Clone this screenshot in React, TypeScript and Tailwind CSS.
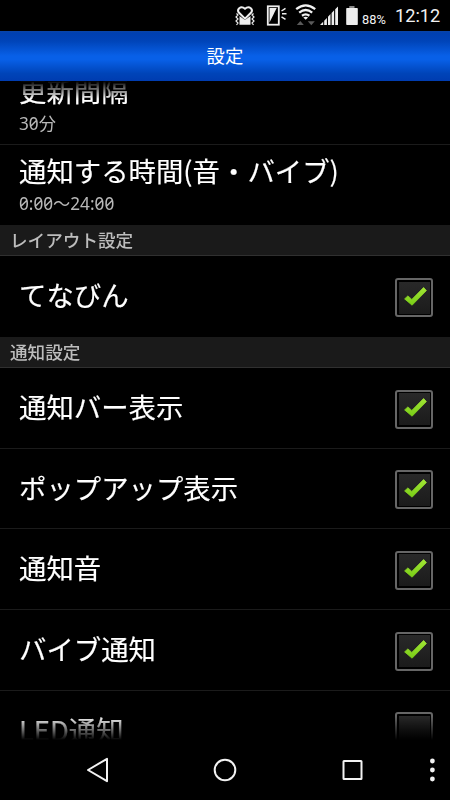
import React from 'react';

function CheckBox({ checked }: { checked: boolean }) {
  return (
    <span className="flex h-[39px] w-[38px] shrink-0 items-center justify-center rounded-[3px] border-2 border-[#666666] bg-black">
      <span className="flex h-[32px] w-[31px] items-center justify-center bg-gradient-to-b from-[#292929] to-[#1b1b1b]">
        {checked && (
          <svg width="31" height="32" viewBox="0 0 31 32" fill="none">
            <defs>
              <linearGradient id="tick" x1="0" y1="0" x2="0" y2="1">
                <stop offset="0" stopColor="#a2e635" />
                <stop offset="1" stopColor="#78cc16" />
              </linearGradient>
            </defs>
            <path d="M5.6 16.9 8.9 13.9 12.8 17.4 24.6 5.5 27.4 8.6 13.1 23.2Z" fill="url(#tick)" stroke="url(#tick)" strokeWidth="0.8" strokeLinejoin="round" />
          </svg>
        )}
      </span>
    </span>
  );
}

function TextRow({ title, summary, last }: { title: string; summary: string; last?: boolean }) {
  return (
    <div className={last ? 'h-[80px] shrink-0 px-[19px] pt-[8px]' : 'h-[81px] shrink-0 border-b border-[#1b1b1b] px-[19px] pt-[9px]'}>
      <div className="h-[34px] text-[27.4px] leading-[34px] text-white [-webkit-text-stroke:0.15px_white]">{title}</div>
      <div className="mt-[6px] h-[22px] font-['Noto_Sans','Noto_Sans_CJK_JP',sans-serif] text-[17.2px] leading-[22px] text-[#b8b8b8] slashed-zero">{summary}</div>
    </div>
  );
}

function CheckRow({ title, checked = true, last }: { title: string; checked?: boolean; last?: boolean }) {
  return (
    <div className={last ? 'flex h-[81px] shrink-0 items-center justify-between pr-[17px] pl-[19px]' : 'flex h-[80.7px] shrink-0 items-center justify-between border-b border-[#1b1b1b] pr-[17px] pl-[19px]'}>
      <span className={last ? 'pb-[6px] text-[27.4px] leading-[36px] text-white [-webkit-text-stroke:0.15px_white]' : 'pb-[4px] text-[27.4px] leading-[36px] text-white [-webkit-text-stroke:0.15px_white]'}>{title}</span>
      <span className="pt-[2.5px]"><CheckBox checked={checked} /></span>
    </div>
  );
}

function Section({ title }: { title: string }) {
  return (
    <div className="h-[31px] shrink-0 border-b border-[#303030] bg-[#1a1a1a] pl-[10px] text-[17.6px] leading-[29px] font-medium text-[#bdbdbd]">{title}</div>
  );
}

function StatusBar() {
  return (
    <div className="flex h-[31px] shrink-0 justify-end bg-black pr-[10px] text-[#f2f2f2]">
      <svg width="132" height="31" viewBox="234 0 132 31" fill="none">
        <path d="M239.5 16V24.8H250.5V16L245 20Z" fill="#eeeeee" />
        <path d="M245 18.6 238.6 12.3Q237.2 10 239.2 8.2Q242 6.2 245 8.8Q248 6.2 250.8 8.2Q252.8 10 251.4 12.3Z" fill="black" stroke="#eeeeee" strokeWidth="2" />
        <path d="M236.5 13.5 238 15 236 17 238 19 236 21 238 23 236.5 25M253.5 13.5 252 15 254 17 252 19 254 21 252 23 253.5 25" stroke="#eeeeee" strokeWidth="1.2" />
        <rect x="267.8" y="6.3" width="11" height="18.4" stroke="#eeeeee" strokeWidth="1.8" />
        <path d="M269.5 8H276.7L269.5 22.5Z" fill="#eeeeee" />
        <path d="M281.5 11 285.5 8.3M282 13.8H286.5M281.5 16.8 285.5 19.3" stroke="#eeeeee" strokeWidth="1.5" />
        <g stroke="#f2f2f2" strokeWidth="2.3">
          <path d="M296.2 9.2Q305.7 1.6 315.2 9.2" />
          <path d="M299.2 12.6Q305.7 7.4 312.2 12.6" />
          <path d="M302 15.7Q305.7 13 309.4 15.7" />
        </g>
        <path d="M303.3 17.4Q305.7 15.9 308.1 17.4L305.7 19.8Z" fill="#f2f2f2" />
        <path d="M296.8 25 300.3 21 303.8 25Z" fill="#5a5a5a" />
        <path d="M307.8 21.2H314.8L311.3 25.2Z" fill="#5a5a5a" />
        <path d="M320 25 323.2 21.8V25ZM324.2 25V20.7L326.9 17.9V25ZM328 25V16.8L330.5 14.1V25ZM331.6 25V13L334.1 10.3V25ZM335.2 25V9.2L338 6.4V25Z" fill="#ededed" />
        <rect x="346.2" y="8" width="11.6" height="17" rx="0.8" fill="#ededed" />
        <rect x="349.3" y="6" width="5.2" height="2" fill="#8a8a8a" />
      </svg>
      <span className="-ml-[4px] w-[33px] pt-[2px] font-['Roboto',sans-serif] text-[12.8px] leading-[36px] tracking-[0.1px]">88%</span>
      <span className="w-[45px] text-right font-['Roboto',sans-serif] text-[18.2px] leading-[31px] whitespace-nowrap">12:12</span>
    </div>
  );
}

function NavBar() {
  return (
    <div className="h-[60px] shrink-0 bg-black">
      <svg width="450" height="60" viewBox="0 740 450 60" fill="none" stroke="#f2f2f2" strokeWidth="2">
        <path d="M88 770 107 758.8V781.2Z" strokeLinejoin="round" />
        <circle cx="225" cy="770" r="10.3" />
        <rect x="343.5" y="761" width="18" height="18" rx="0.5" />
        <g fill="#f2f2f2" stroke="none">
          <circle cx="432.4" cy="761" r="2.4" />
          <circle cx="432.4" cy="770" r="2.4" />
          <circle cx="432.4" cy="779" r="2.4" />
        </g>
      </svg>
    </div>
  );
}

export default function App() {
  return (
    <div className="flex h-[800px] w-[450px] flex-col overflow-hidden bg-black font-['Noto_Sans_CJK_JP',sans-serif]">
      <StatusBar />
      <header className="h-[50px] shrink-0 bg-[linear-gradient(to_bottom,#0a45a8_0%,#0040b0_4%,#0044b8_20%,#0860e8_50%,#0860e8_57%,#0044b8_85%,#003cb0_100%)] text-center text-[18.4px] leading-[48px] text-white">設定</header>
      <main className="flex h-[659px] shrink-0 flex-col overflow-hidden [mask-image:linear-gradient(to_bottom,transparent_0px,black_18px,black_635px,transparent_659px)]">
        <div className="-mt-[17px] flex flex-col">
          <TextRow title="更新間隔" summary="30分" />
          <TextRow title="通知する時間(音・バイブ)" summary="0:00～24:00" last />
          <Section title="レイアウト設定" />
          <CheckRow title="てなびん" last />
          <Section title="通知設定" />
          <CheckRow title="通知バー表示" />
          <CheckRow title="ポップアップ表示" />
          <CheckRow title="通知音" />
          <CheckRow title="バイブ通知" />
          <CheckRow title="LED通知" checked={false} />
        </div>
      </main>
      <NavBar />
    </div>
  );
}
